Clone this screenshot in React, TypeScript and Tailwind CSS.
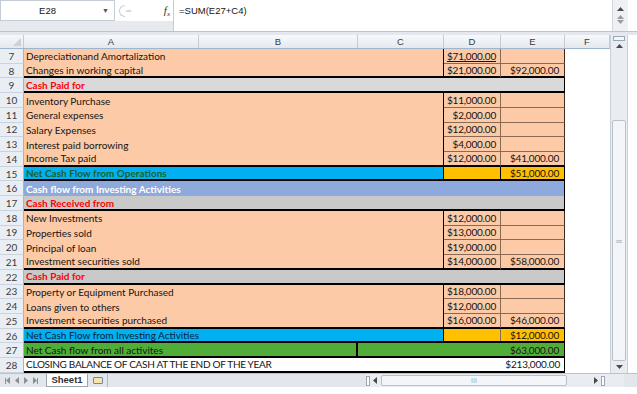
import React from 'react';

type Kind = 'item' | 'head' | 'net' | 'band' | 'all' | 'close';

interface Fila {
  n: number;
  kind: Kind;
  label: string;
  d?: string;
  e?: string;
  fin?: boolean; // fin de bloque: línea negra gruesa
  grey?: string;
  txt?: string;
}

const PEACH = 'bg-[#fccaa6]';

const filas: Fila[] = [
  { n: 7, kind: 'item', label: 'Depreciationand Amortalization', d: '$71,000.00' },
  { n: 8, kind: 'item', label: 'Changes in working capital', d: '$21,000.00', e: '$92,000.00', fin: true },
  { n: 9, kind: 'head', label: 'Cash Paid for', grey: 'bg-[#d9d9d9]' },
  { n: 10, kind: 'item', label: 'Inventory Purchase', d: '$11,000.00' },
  { n: 11, kind: 'item', label: 'General expenses', d: '$2,000.00' },
  { n: 12, kind: 'item', label: 'Salary Expenses', d: '$12,000.00' },
  { n: 13, kind: 'item', label: 'Interest paid borrowing', d: '$4,000.00' },
  { n: 14, kind: 'item', label: 'Income Tax paid', d: '$12,000.00', e: '$41,000.00', fin: true },
  { n: 15, kind: 'net', label: 'Net Cash Flow from Operations', e: '$51,000.00', txt: 'font-bold text-[#1c6228]' },
  { n: 16, kind: 'band', label: 'Cash flow from Investing Activities' },
  { n: 17, kind: 'head', label: 'Cash Received from', grey: 'bg-[#c9c9c9]' },
  { n: 18, kind: 'item', label: 'New Investments', d: '$12,000.00' },
  { n: 19, kind: 'item', label: 'Properties sold', d: '$13,000.00' },
  { n: 20, kind: 'item', label: 'Principal of loan', d: '$19,000.00' },
  { n: 21, kind: 'item', label: 'Investment securities sold', d: '$14,000.00', e: '$58,000.00', fin: true },
  { n: 22, kind: 'head', label: 'Cash Paid for', grey: 'bg-[#c9c9c9]' },
  { n: 23, kind: 'item', label: 'Property or Equipment Purchased', d: '$18,000.00' },
  { n: 24, kind: 'item', label: 'Loans given to others', d: '$12,000.00' },
  { n: 25, kind: 'item', label: 'Investment securities purchased', d: '$16,000.00', e: '$46,000.00', fin: true },
  { n: 26, kind: 'net', label: 'Net Cash Flow from Investing Activities', e: '$12,000.00', txt: 'text-[#0d1f3c]' },
  { n: 27, kind: 'all', label: 'Net Cash flow from all activites', e: '$63,000.00' },
  { n: 28, kind: 'close', label: 'CLOSING BALANCE OF CASH AT THE END OF THE YEAR', e: '$213,000.00' },
];

const RowHeader: React.FC<{ n: number }> = ({ n }) => (
  <div className="w-[24px] shrink-0 h-full flex items-center justify-center bg-[#e9eef4] border-r border-[#9eb6ce] border-b border-b-[#c9d3de] text-[10px] text-[#3b3b3b]">
    {n}
  </div>
);

const Contenido: React.FC<{ f: Fila }> = ({ f }) => {
  const bot = f.fin ? 'border-b-2 border-b-black' : '';
  if (f.kind === 'item') {
    return (
      <div className="flex w-[541px] h-full">
        <div className={`w-[420px] ${PEACH} ${bot} border-r border-r-black pl-[2px] flex items-center`}>{f.label}</div>
        <div className={`w-[57px] ${PEACH} ${f.fin ? bot : 'border-b border-b-[#8a6a55]'} border-r border-r-[#8a6a55] flex items-center justify-end pr-[4px] tracking-[-0.2px]`}>
          <span className={f.n === 7 ? 'underline underline-offset-1' : ''}>{f.d}</span>
        </div>
        <div className={`w-[64px] ${PEACH} ${f.fin ? bot : 'border-b border-b-[#8a6a55]'} border-r border-r-[#3b2b20] flex items-center justify-end pr-[5px] tracking-[-0.2px]`}>{f.e}</div>
      </div>
    );
  }
  if (f.kind === 'head') {
    return (
      <div className={`w-[541px] h-full ${f.grey} border-b-2 border-b-black border-r border-r-black pl-[2px] flex items-center font-bold text-[#ff0000]`}>
        {f.label}
      </div>
    );
  }
  if (f.kind === 'band') {
    return (
      <div className="w-[541px] h-full bg-[#8ea9db] border-r border-r-black pl-[2px] flex items-center font-bold text-white">
        {f.label}
      </div>
    );
  }
  if (f.kind === 'net') {
    return (
      <div className="flex w-[541px] h-full border-b-2 border-b-black">
        <div className={`w-[420px] bg-[#00b0f0] border-r border-r-black pl-[2px] flex items-center ${f.txt}`}>{f.label}</div>
        <div className={`w-[57px] bg-[#ffc000] border-r ${f.n === 15 ? 'border-r-black' : 'border-r-[#8a6a55]'}`} />
        <div className="w-[64px] bg-[#ffc000] border-r border-r-black flex items-center justify-end pr-[5px] tracking-[-0.2px]">{f.e}</div>
      </div>
    );
  }
  if (f.kind === 'all') {
    return (
      <div className="flex w-[541px] h-full border-b-2 border-b-black bg-[#50ae38]">
        <div className="w-[334px] border-r-2 border-r-black pl-[2px] flex items-center">{f.label}</div>
        <div className="w-[207px] border-r border-r-black flex items-center justify-end pr-[5px] tracking-[-0.2px]">{f.e}</div>
      </div>
    );
  }
  return (
    <div className="flex w-[541px] h-full border-b-2 border-b-black bg-white border-r border-r-black">
      <div className="flex-1 pl-[2px] flex items-center tracking-[-0.3px]">{f.label}</div>
      <div className="w-[64px] flex items-center justify-end pr-[4px] tracking-[-0.2px]">{f.e}</div>
    </div>
  );
};

const Flecha: React.FC<{ dir: 'up' | 'down' | 'left' | 'right'; color?: string }> = ({ dir, color = '#4a4a4a' }) => {
  const pts = {
    up: '0,4 3.5,0 7,4',
    down: '0,0 3.5,4 7,0',
    left: '4,0 0,3.5 4,7',
    right: '0,0 4,3.5 0,7',
  }[dir];
  const w = dir === 'up' || dir === 'down' ? 7 : 4;
  const h = dir === 'up' || dir === 'down' ? 4 : 7;
  return (
    <svg width={w} height={h} viewBox={`0 0 ${w} ${h}`}>
      <polygon points={pts} fill={color} />
    </svg>
  );
};

const App: React.FC = () => {
  const cols = [
    { l: 'A', w: 'w-[175px]' },
    { l: 'B', w: 'w-[159px]' },
    { l: 'C', w: 'w-[86px]' },
    { l: 'D', w: 'w-[57px]' },
    { l: 'E', w: 'w-[64px]' },
    { l: 'F', w: 'w-[45px]' },
  ];

  return (
    <div className="w-[637px] h-[394px] bg-white overflow-hidden text-[#141414] font-['Lato','Liberation_Sans',sans-serif] text-[10px] leading-none">
      {/* Barra de fórmulas */}
      <div className="flex h-[32px] bg-[#e9ecf0] border-b border-[#b9c4d0]">
        <div className="w-[173px] flex flex-col">
          <div className="h-[21px] flex bg-white">
            <div className="w-[115px] flex items-center border border-[#c5ccd6] font-['Liberation_Sans',sans-serif] text-[9.5px]">
              <span className="flex-1 text-center pr-[8px]">E28</span>
              <span className="mr-[5px] text-[#555] text-[7px]">▼</span>
            </div>
            <div className="flex-1 flex items-center bg-white">
              <span className="ml-[4px] w-[6px] h-[12px] border border-[#c8ced6] rounded-l-full border-r-0" />
              <span className="ml-[1px] text-[#b8bec6] text-[7px]">═</span>
              <span className="ml-auto mr-[3px] italic font-['Liberation_Serif',serif] text-[11px] text-[#333]">
                f<sub className="text-[7px]">x</sub>
              </span>
            </div>
          </div>
          <div className="flex-1 bg-[#e6e9ed]" />
        </div>
        <div className="w-[439px] bg-white border-l border-[#c5ccd6] pl-[5px] pt-[6px] font-['Liberation_Sans',sans-serif] text-[9.5px]">
          =SUM(E27+C4)
        </div>
        <div className="w-[16px] bg-[#eef0f3] border-l border-[#d0d6de] flex flex-col items-center pt-[7px] gap-[4px]">
          <Flecha dir="up" />
          <div className="flex flex-col items-center gap-[1px] opacity-50">
            <Flecha dir="up" />
            <Flecha dir="down" />
          </div>
        </div>
        <div className="flex-1 bg-white" />
      </div>
      <div className="h-[3px] bg-[#e4e8ee]" />

      {/* Hoja */}
      <div className="flex">
        <div className="w-[610px]">
          <div className="flex h-[14px] bg-gradient-to-b from-[#f7f9fb] to-[#e4e9ef] border-b border-[#9eb6ce] text-[9.5px] text-[#3a3a3a] font-['Liberation_Sans',sans-serif]">
            <div className="w-[24px] border-r border-[#c1ccd8] flex items-end justify-end p-[2px]">
              <div className="w-0 h-0 border-l-[8px] border-l-transparent border-b-[8px] border-b-[#c9d1db]" />
            </div>
            {cols.map((c) => (
              <div key={c.l} className={`${c.w} border-r border-[#c1ccd8] flex items-center justify-center`}>
                {c.l}
              </div>
            ))}
          </div>
          <div className="flex flex-col">
            {filas.map((f) => (
              <div key={f.n} className="flex h-[14.73px]">
                <RowHeader n={f.n} />
                <div className="flex items-center">
                  <Contenido f={f} />
                </div>
                <div className="flex-1 bg-white" />
              </div>
            ))}
          </div>
        </div>
        {/* Barra vertical */}
        <div className="w-[18px] h-[338px] bg-[#e9edf2] border-l border-r border-[#c9d0d9] flex flex-col items-center">
          <div className="w-[12px] h-[5px] mt-[1px] border border-[#9aa6b4] bg-[#f4f6f8]" />
          <div className="mt-[3px]"><Flecha dir="up" /></div>
          <div className="mt-[72px] w-[14px] flex-1 bg-[#f3f5f8] border border-[#b8c2ce] rounded-[2px] flex items-center justify-center text-[#9aa6b4] text-[8px]">
            ═
          </div>
          <div className="mt-[4px] mb-[4px]"><Flecha dir="down" /></div>
        </div>
        <div className="flex-1 bg-white" />
      </div>

      {/* Pestañas */}
      <div className="flex h-[14px] bg-[#e3e7ec] border-t border-[#b9c4d0] items-center font-['Liberation_Sans',sans-serif]">
        <div className="w-[46px] flex items-center gap-[5px] pl-[5px]">
          <div className="flex items-center"><div className="w-[1px] h-[6px] bg-[#8a8f96]" /><Flecha dir="left" color="#8a8f96" /></div>
          <Flecha dir="left" color="#8a8f96" />
          <Flecha dir="right" color="#8a8f96" />
          <div className="flex items-center"><Flecha dir="right" color="#8a8f96" /><div className="w-[1px] h-[6px] bg-[#8a8f96]" /></div>
        </div>
        <div className="h-full w-[42px] bg-white border-x border-b border-[#9aa6b4] flex items-center justify-center font-bold text-[9.5px] text-[#333]">
          Sheet1
        </div>
        <div className="h-full w-[20px] flex items-center justify-center border-r border-[#b0bac6]">
          <div className="w-[10px] h-[7px] border border-[#6a88b4] bg-[#f6e6a8] rounded-[1px]" />
        </div>
        <div className="w-[258px]" />
        <div className="flex items-center h-full w-[240px] bg-[#e9edf2]">
          <div className="w-[4px] h-[10px] border border-[#9aa6b4] bg-white" />
          <div className="ml-[3px]"><Flecha dir="left" /></div>
          <div className="ml-[4px] w-[186px] h-[11px] bg-[#f3f5f8] border border-[#b8c2ce] rounded-[2px] flex items-center justify-center text-[#9aa6b4] text-[7px]">
            III
          </div>
          <div className="ml-auto mr-[3px]"><Flecha dir="right" /></div>
          <div className="w-[4px] h-[10px] border border-[#9aa6b4] bg-white mr-[1px]" />
        </div>
        <div className="w-[18px] h-full bg-[#e9edf2]" />
      </div>
    </div>
  );
};

export default App;
